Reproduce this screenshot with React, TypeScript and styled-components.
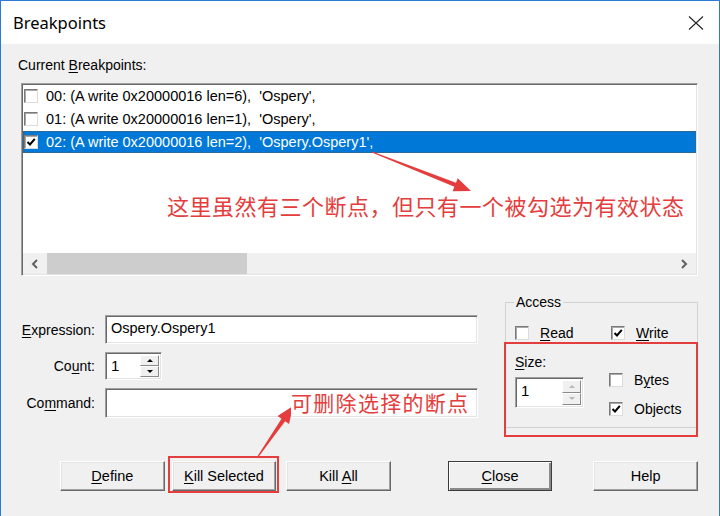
import React from 'react';
import styled, { createGlobalStyle } from 'styled-components';

const RED = '#e43d3d';

const rows = [
  { text: "00: (A write 0x20000016 len=6),  'Ospery',", checked: false },
  { text: "01: (A write 0x20000016 len=1),  'Ospery',", checked: false },
  { text: "02: (A write 0x20000016 len=2),  'Ospery.Ospery1',", checked: true },
];

// tail -> tip, returns polygon points for a tapered arrow
const arrowPoints = (x1: number, y1: number, x2: number, y2: number) => {
  const dx = x2 - x1;
  const dy = y2 - y1;
  const len = Math.hypot(dx, dy);
  const ux = dx / len;
  const uy = dy / len;
  const nx = -uy;
  const ny = ux;
  const head = 17;
  const hw = 7;
  const bx = x2 - ux * head;
  const by = y2 - uy * head;
  const pts = [
    [x1 + nx * 0.6, y1 + ny * 0.6],
    [bx + nx * 2.2, by + ny * 2.2],
    [bx + nx * hw, by + ny * hw],
    [x2, y2],
    [bx - nx * hw, by - ny * hw],
    [bx - nx * 2.2, by - ny * 2.2],
    [x1 - nx * 0.6, y1 - ny * 0.6],
  ];
  return pts.map((p) => p.join(',')).join(' ');
};

const CheckBox = ({ checked }: { checked?: boolean }) => (
  <Box>
    {checked && (
      <svg width="10" height="10" viewBox="0 0 10 10">
        <path d="M1.5 5 L4 7.5 L8.8 1.8" fill="none" stroke="#000" strokeWidth="2" />
      </svg>
    )}
  </Box>
);

const Spinner = ({ disabled }: { disabled?: boolean }) => (
  <Spin>
    <SpinBtn>
      <Tri $up $disabled={disabled} />
    </SpinBtn>
    <SpinBtn>
      <Tri $disabled={disabled} />
    </SpinBtn>
  </Spin>
);

export default function App() {
  return (
    <>
      <GlobalStyle />
      <Window>
        <TitleBar>
          <Title>Breakpoints</Title>
          <svg width="16" height="14" viewBox="0 0 16 14">
            <path d="M1 0.5 L15 13.5 M15 0.5 L1 13.5" stroke="#222" strokeWidth="1.1" />
          </svg>
        </TitleBar>

        <Body>
          <Label>
            Current <u>B</u>reakpoints:
          </Label>
          <ListBox>
            <Rows>
              {rows.map((r) => (
                <Row key={r.text} $selected={r.checked}>
                  <CheckBox checked={r.checked} />
                  <RowText>{r.text}</RowText>
                </Row>
              ))}
            </Rows>
            <HScroll>
              <ScrollArrow>
                <svg width="8" height="10" viewBox="0 0 8 10">
                  <path d="M6 1 L2 5 L6 9" fill="none" stroke="#606060" strokeWidth="2" />
                </svg>
              </ScrollArrow>
              <Thumb />
              <Track />
              <ScrollArrow>
                <svg width="8" height="10" viewBox="0 0 8 10">
                  <path d="M2 1 L6 5 L2 9" fill="none" stroke="#606060" strokeWidth="2" />
                </svg>
              </ScrollArrow>
            </HScroll>
          </ListBox>

          <Lower>
            <FormGrid>
              <FieldLabel>
                <u>E</u>xpression:
              </FieldLabel>
              <TextField $h={29}>Ospery.Ospery1</TextField>
              <FieldLabel>
                Co<u>u</u>nt:
              </FieldLabel>
              <SpinField $w={57} $h={28}>
                <SpinValue>1</SpinValue>
                <Spinner />
              </SpinField>
              <FieldLabel>
                Co<u>m</u>mand:
              </FieldLabel>
              <TextField $h={30} />
            </FormGrid>

            <Access>
              <Legend>Access</Legend>
              <AccessRow>
                <CheckItem>
                  <CheckBox />
                  <span>
                    <u>R</u>ead
                  </span>
                </CheckItem>
                <CheckItem>
                  <CheckBox checked />
                  <span>
                    <u>W</u>rite
                  </span>
                </CheckItem>
              </AccessRow>
              <SizeArea>
                <SizeCol>
                  <Label>
                    <u>S</u>ize:
                  </Label>
                  <SpinField $w={69} $h={31}>
                    <SpinValue>1</SpinValue>
                    <Spinner disabled />
                  </SpinField>
                </SizeCol>
                <UnitCol>
                  <CheckItem>
                    <CheckBox />
                    <span>
                      B<u>y</u>tes
                    </span>
                  </CheckItem>
                  <CheckItem>
                    <CheckBox checked />
                    <span>
                      Ob<u>j</u>ects
                    </span>
                  </CheckItem>
                </UnitCol>
              </SizeArea>
            </Access>
          </Lower>

          <ButtonRow>
            <Button $gap={42}>
              <span>
                <u>D</u>efine
              </span>
            </Button>
            <Button $gap={7}>
              <span>
                <u>K</u>ill Selected
              </span>
            </Button>
            <Button $gap={10}>
              <span>
                Kill <u>A</u>ll
              </span>
            </Button>
            <Button $gap={57} $default>
              <span>
                <u>C</u>lose
              </span>
            </Button>
            <Button $gap={41}>
              <span>Help</span>
            </Button>
          </ButtonRow>
        </Body>

        <Overlay>
          <svg width="720" height="516" viewBox="0 0 720 516">
            <polygon points={arrowPoints(372, 152, 471, 191)} fill={RED} />
            <polygon points={arrowPoints(257, 458, 293, 406)} fill={RED} />
          </svg>
          <Note $x={167} $y={192} $size={22} $spacing={0.5}>
            这里虽然有三个断点，但只有一个被勾选为有效状态
          </Note>
          <Note $x={291} $y={390} $size={21} $spacing={1.3}>
            可删除选择的断点
          </Note>
          <Frame $x={504} $y={342} $w={194} $h={95} />
          <Frame $x={168} $y={456} $w={111} $h={37} />
        </Overlay>
      </Window>
    </>
  );
}

const GlobalStyle = createGlobalStyle`
  html, body {
    margin: 0;
    padding: 0;
  }
  body {
    background: #f0f0f0;
    font-family: "Liberation Sans", Arial, sans-serif;
    font-size: 14px;
    color: #000;
    overflow: hidden;
  }
  u {
    text-underline-offset: 2px;
  }
`;

const Window = styled.div`
  position: relative;
  width: 720px;
  height: 516px;
  box-sizing: border-box;
  border: 1px solid #2b7bd4;
  border-bottom: none;
  background: #f0f0f0;
  display: flex;
  flex-direction: column;
`;

const TitleBar = styled.div`
  height: 43px;
  flex-shrink: 0;
  background: #fff;
  display: flex;
  align-items: center;
  justify-content: space-between;
  padding: 0 15px 0 12px;
`;

const Title = styled.div`
  font-family: "Noto Sans", "Open Sans", sans-serif;
  font-size: 16.5px;
  color: #000;
`;

const Body = styled.div`
  display: flex;
  flex-direction: column;
  padding: 13px 21px 0 17px;
`;

const Label = styled.div`
  line-height: 16px;
  height: 16px;
  color: #000;
`;

const ListBox = styled.div`
  margin: 10px 0 0 3px;
  height: 193px;
  box-sizing: border-box;
  padding: 1px;
  background: #fff;
  border: 1px solid;
  border-color: #a0a0a0 #fff #fff #a0a0a0;
  box-shadow: inset 1px 1px 0 #696969, inset -1px -1px 0 #e3e3e3;
  display: flex;
  flex-direction: column;
`;

const Rows = styled.div`
  flex: 1;
`;

const Row = styled.div<{ $selected?: boolean }>`
  height: 22px;
  margin-bottom: 1px;
  box-sizing: border-box;
  display: flex;
  align-items: center;
  gap: 8px;
  padding-left: 1px;
  background: ${(p) => (p.$selected ? '#0078d7' : 'transparent')};
  color: ${(p) => (p.$selected ? '#fff' : '#000')};
  outline: ${(p) => (p.$selected ? '1px dotted #5a5a5a' : 'none')};
  outline-offset: -1px;
`;

const RowText = styled.span`
  white-space: pre;
  font-size: 14.5px;
`;

const Box = styled.span`
  width: 14px;
  height: 14px;
  flex-shrink: 0;
  box-sizing: border-box;
  background: #fff;
  border: 1px solid;
  border-color: #7a7a7a #dcdcdc #dcdcdc #7a7a7a;
  box-shadow: inset 1px 1px 0 #a8a8a8;
  display: inline-flex;
  align-items: center;
  justify-content: center;
`;

const HScroll = styled.div`
  height: 21px;
  display: flex;
  background: #f0f0f0;
`;

const ScrollArrow = styled.div`
  width: 24px;
  display: flex;
  align-items: center;
  justify-content: center;
`;

const Thumb = styled.div`
  width: 200px;
  background: #cdcdcd;
`;

const Track = styled.div`
  flex: 1;
`;

const Lower = styled.div`
  display: flex;
  justify-content: space-between;
  align-items: flex-start;
`;

const FormGrid = styled.div`
  display: grid;
  grid-template-columns: 77px 373px;
  column-gap: 10px;
  row-gap: 8px;
  margin-top: 39px;
  align-items: center;
`;

const FieldLabel = styled.div`
  text-align: right;
  line-height: 16px;
`;

const Sunken = styled.div<{ $h: number }>`
  height: ${(p) => p.$h}px;
  box-sizing: border-box;
  background: #fff;
  border: 1px solid;
  border-color: #a0a0a0 #fff #fff #a0a0a0;
  box-shadow: inset 1px 1px 0 #696969, inset -1px -1px 0 #e3e3e3;
`;

const TextField = styled(Sunken)`
  padding: 4px 0 0 5px;
  font-size: 14.5px;
`;

const SpinField = styled(Sunken)<{ $w: number }>`
  width: ${(p) => p.$w}px;
  display: flex;
  padding: 2px;
  justify-self: start;
`;

const SpinValue = styled.div`
  flex: 1;
  padding: 2px 0 0 3px;
  font-size: 15px;
`;

const Spin = styled.div`
  width: 19px;
  display: flex;
  flex-direction: column;
`;

const SpinBtn = styled.div`
  flex: 1;
  box-sizing: border-box;
  background: #f0f0f0;
  border: 1px solid;
  border-color: #fff #8a8a8a #8a8a8a #fff;
  display: flex;
  align-items: center;
  justify-content: center;
`;

const Tri = styled.span<{ $up?: boolean; $disabled?: boolean }>`
  width: 0;
  height: 0;
  border-left: 3px solid transparent;
  border-right: 3px solid transparent;
  ${(p) =>
    p.$up
      ? `border-bottom: 3px solid ${p.$disabled ? '#b8b8b8' : '#000'};`
      : `border-top: 3px solid ${p.$disabled ? '#b8b8b8' : '#000'};`}
`;

const Access = styled.fieldset`
  margin: 18px 0 0 0;
  width: 193px;
  box-sizing: border-box;
  border: 1px solid #d2d2d2;
  padding: 0 0 10px 8px;
`;

const Legend = styled.legend`
  padding: 0 2px;
  line-height: 16px;
`;

const AccessRow = styled.div`
  display: grid;
  grid-template-columns: 96px auto;
  margin-top: 15px;
  padding-left: 1px;
`;

const CheckItem = styled.div`
  display: flex;
  align-items: center;
  gap: 11px;
  height: 16px;
  line-height: 16px;
`;

const SizeArea = styled.div`
  display: grid;
  grid-template-columns: 94px auto;
  margin-top: 13px;
  padding-left: 1px;
`;

const SizeCol = styled.div`
  display: flex;
  flex-direction: column;
  gap: 7px;
`;

const UnitCol = styled.div`
  display: flex;
  flex-direction: column;
  gap: 13px;
  padding-top: 18px;
`;

const ButtonRow = styled.div`
  display: flex;
  margin-top: 33px;
`;

const Button = styled.div<{ $gap: number; $default?: boolean }>`
  width: 105px;
  height: 30px;
  margin-left: ${(p) => p.$gap}px;
  box-sizing: border-box;
  display: flex;
  align-items: center;
  justify-content: center;
  background: #f0f0f0;
  border: 1px solid;
  border-color: ${(p) => (p.$default ? '#3c3c3c' : '#fff #696969 #696969 #fff')};
  box-shadow: ${(p) =>
    p.$default
      ? 'inset 1px 1px 0 #fff, inset -2px -2px 0 #8a8a8a'
      : 'inset -1px -1px 0 #a0a0a0, inset 1px 1px 0 #e3e3e3'};
  font-size: 14.5px;
`;

const Overlay = styled.div`
  position: absolute;
  inset: -1px 0 0 -1px;
  pointer-events: none;

  svg {
    position: absolute;
    left: 0;
    top: 0;
  }
`;

const Note = styled.div<{ $x: number; $y: number; $size: number; $spacing: number }>`
  position: absolute;
  left: ${(p) => p.$x}px;
  top: ${(p) => p.$y}px;
  font-family: "Noto Sans CJK SC", sans-serif;
  font-size: ${(p) => p.$size}px;
  letter-spacing: ${(p) => p.$spacing}px;
  line-height: 1.2;
  color: ${RED};
  white-space: nowrap;
  background: #fff;
`;

const Frame = styled.div<{ $x: number; $y: number; $w: number; $h: number }>`
  position: absolute;
  left: ${(p) => p.$x}px;
  top: ${(p) => p.$y}px;
  width: ${(p) => p.$w}px;
  height: ${(p) => p.$h}px;
  box-sizing: border-box;
  border: 2px solid ${RED};
`;
